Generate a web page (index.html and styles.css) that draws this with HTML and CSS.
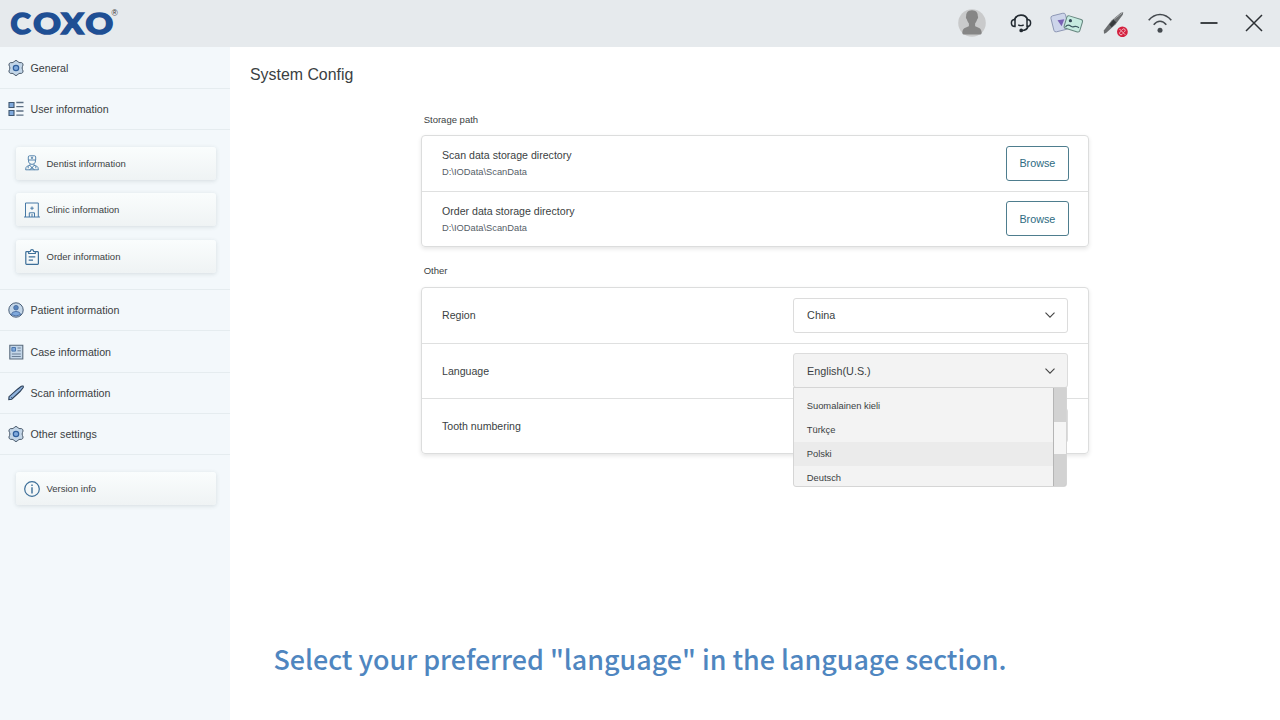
FILE: index.html
```html
<!DOCTYPE html>
<html lang="en">

<head>
    <meta charset="UTF-8">
    <meta name="viewport" content="width=device-width, initial-scale=1.0">
    <title>System Config</title>
    <link rel="stylesheet" href="styles.css">
</head>

<body>
    <!-- Shared icons -->
    <svg width="0" height="0" class="defs">
        <symbol id="gear" viewBox="0 0 16 16">
            <path d="M8 .5 Q9.300 .5 10.200 2 Q10.800 2.800 12 2.600 Q14 2.300 14.800 3.600 Q15.500 5 14.500 6.400 Q13.700 8 14.500 9.600 Q15.500 11 14.800 12.400 Q14 13.700 12 13.400 Q10.800 13.200 10.200 14 Q9.300 15.500 8 15.500 Q6.700 15.500 5.800 14 Q5.200 13.200 4 13.400 Q2 13.700 1.200 12.400 Q.5 11 1.500 9.600 Q2.300 8 1.500 6.400 Q.5 5 1.200 3.600 Q2 2.300 4 2.600 Q5.200 2.800 5.800 2 Q6.700 .5 8 .5Z" fill="#c3d6e8" stroke="#4a5a6b" stroke-width="1"/>
            <circle cx="8" cy="8" r="2.700" fill="#7fa9dc" stroke="#2f5f9c" stroke-width="1.200"/>
        </symbol>
        <symbol id="chevron" viewBox="0 0 10 6">
            <path d="M.5 .6 L5 5.200 L9.500 .6" fill="none" stroke="#444" stroke-width="1.1"/>
        </symbol>
    </svg>

    <header class="topbar">
        <svg class="logo" width="112" height="46" viewBox="0 0 112 46">
            <text class="logo-text" y="33.900"><tspan x="1.500" textLength="20" lengthAdjust="spacingAndGlyphs">C</tspan><tspan x="24.300" textLength="27.600" lengthAdjust="spacingAndGlyphs">O</tspan><tspan x="52.300" textLength="22.500" lengthAdjust="spacingAndGlyphs">X</tspan><tspan x="76.500" textLength="27.600" lengthAdjust="spacingAndGlyphs">O</tspan></text>
            <text class="logo-mark" x="102.500" y="16">®</text>
        </svg>
        <div class="tools">
            <svg class="avatar" width="28" height="28" viewBox="0 0 28 28">
                <circle cx="14" cy="14" r="13.8" fill="#c9cacb"/>
                <path d="M14 1.200 C9.800 1.200 7.900 4 8.200 7.300 C7.500 7.600 8 10.200 8.900 10.500 C9.300 12.500 10.300 13.500 10.900 14.400 L10.900 17 C10.100 18.300 4.600 18 4.300 23.500 Q4.300 25.400 5.500 25.400 L22.500 25.400 Q23.700 25.400 23.700 23.500 C23.400 18 17.900 18.300 17.100 17 L17.100 14.400 C17.700 13.500 18.700 12.500 19.100 10.500 C20 10.200 20.500 7.600 19.800 7.300 C20.100 4 18.200 1.200 14 1.200Z" fill="#868686"/>
            </svg>
            <svg class="headset" width="22" height="20" viewBox="0 0 22 20" fill="none" stroke="#222a31" stroke-width="1.7">
                <path d="M4.200 7 A7.200 7.200 0 0 1 17.800 7"/>
                <path d="M5 6.600 Q1.400 6.500 1.400 10 Q1.400 13.500 5 13.500Z M17 6.600 Q20.600 6.500 20.600 10 Q20.600 13.500 17 13.500Z" stroke-width="1.5"/>
                <path d="M18 13.500 Q16.800 17.500 11.800 17.500" />
                <path d="M8.200 11.900 Q11 13.400 13.700 11.900" stroke-width="1.400"/>
                <circle cx="11.200" cy="17.400" r="1" fill="#222a31"/>
            </svg>
            <svg class="media" width="34" height="24" viewBox="0 0 34 24">
                <rect x="2.200" y="3.200" width="15" height="16.500" rx="2.200" transform="rotate(-14 10 11.500)" fill="#cdd5ea" stroke="#8b95b2" stroke-width=".9"/>
                <path d="M7.500 9.300 L14.300 8.200 L11.600 15.300Z" fill="#7862b4"/>
                <rect x="15.200" y="6.300" width="16.300" height="13" rx="2" transform="rotate(17 23 12.800)" fill="#c6ebe0" stroke="#66867f" stroke-width="1"/>
                <circle cx="20.400" cy="9.700" r="1.600" fill="#334856"/>
                <path d="M15.500 15.800 C18 12.500 20 14.500 21.500 15.500 C23.500 17 25 13.500 29 16.800" fill="none" stroke="#3c5860" stroke-width="1.200"/>
            </svg>
            <svg class="scanner" width="26" height="28" viewBox="0 0 26 28">
                <path d="M1 24.700 L.8 21.500 L8.500 11.500 L17.800 3.800 L20.300 3.200 L19.800 5.800 L12.500 15.500 L3 24Z" fill="#6b6e70"/>
                <path d="M6.300 15.400 L10.500 10.700 L13.200 13.200 L8.700 18.200Z" fill="#36393c"/>
                <path d="M11 10.200 L19 4.200" stroke="#a9acae" stroke-width="1"/>
                <circle cx="19.400" cy="22.800" r="5.400" fill="#d4213f"/>
                <path d="M18.500 21.400 l1.300-1.300 a1.500 1.500 0 0 1 2.100 2.100 l-1.300 1.300 M20.300 24.200 l-1.300 1.300 a1.500 1.500 0 0 1-2.100-2.100 l1.300-1.300 M16.500 20 l5.800 5.800" fill="none" stroke="#f5c4cc" stroke-width=".9"/>
            </svg>
            <svg class="wifi" width="26" height="22" viewBox="0 0 26 22" fill="none" stroke="#454a4f" stroke-width="1.600">
                <path d="M1.700 8.300 Q6.500 2.500 13 2.500 Q19.500 2.500 24.300 8.300"/>
                <path d="M6.700 12.800 Q9.500 9.300 13 9.300 Q16.500 9.300 19.300 12.800"/>
                <circle cx="13" cy="18.300" r="2.500" fill="#454a4f" stroke="none"/>
            </svg>
            <svg class="minimize" width="18" height="18" viewBox="0 0 18 18">
                <path d="M.5 9 H17.500" stroke="#2c3034" stroke-width="1.800"/>
            </svg>
            <svg class="close" width="18" height="18" viewBox="0 0 18 18">
                <path d="M1 1 L17 17 M17 1 L1 17" stroke="#2c3034" stroke-width="1.500"/>
            </svg>
        </div>
    </header>

    <div class="layout">
        <nav class="sidebar">
            <a class="nav-item"><svg width="16" height="16"><use href="#gear"/></svg>General</a>
            <a class="nav-item">
                <svg width="16" height="16" viewBox="0 0 16 16">
                    <path d="M1 1.500 h5 v5 h-5z M1 9.500 h5 v5 h-5z" fill="#7fa9dc" stroke="#3f566f" stroke-width="1.100"/>
                    <path d="M8.300 1.500 H15.500 M8.300 5.700 H15.500 M8.300 10 H15.500 M8.300 14.200 H15.500" stroke="#5d6f84" stroke-width="1.300"/>
                </svg>User information
            </a>
            <div class="sub-menu">
                <a class="sub-item">
                    <svg width="16" height="16" viewBox="0 0 16 16" fill="none" stroke="#4679a6" stroke-width=".9">
                        <path d="M4.300 5 V2 Q4.300 .9 5.500 .8 H10.500 Q11.700 .9 11.700 2 V5Z M4.600 5 V7 Q5.500 9.400 8 9.400 Q10.500 9.400 11.400 7 V5 M8 1.800 V4 M6.900 2.900 H9.100"/>
                        <path d="M6 9.200 V10.300 L3.300 11.100 Q1.600 12 1.600 14.800 H14.400 Q14.400 12 12.700 11.100 L10 10.300 V9.200 M6 10.300 L8 13 L10 10.300 M4.200 11.200 V13.300 M11.800 11.200 V13.300 M5.500 14.600 L8 13 L10.500 14.600"/>
                    </svg>Dentist information
                </a>
                <a class="sub-item">
                    <svg width="16" height="16" viewBox="0 0 16 16" fill="none" stroke="#4679a6" stroke-width="1">
                        <path d="M1.500 15 V1 H14.300 V15 M0 15 H16 M5.300 15 V10.800 H10.500 V15 M8 12 V15 M8 4.500 V7.900 M6.300 6.200 H9.700"/>
                    </svg>Clinic information
                </a>
                <a class="sub-item">
                    <svg width="16" height="16" viewBox="0 0 16 16" fill="none" stroke="#3c6e98" stroke-width="1.200">
                        <path d="M4.500 2.600 H2.600 Q1.800 2.600 1.800 3.400 V14.600 Q1.800 15.400 2.600 15.400 H13.600 Q14.400 15.400 14.400 14.600 V3.400 Q14.400 2.600 13.600 2.600 H11.500"/>
                        <path d="M4.700 4.500 V2.500 H6.300 Q6.600 .7 8 .7 Q9.400 .7 9.700 2.500 H11.300 V4.500Z M4.700 7.900 H11.300 M4.700 11.200 H9"/>
                    </svg>Order information
                </a>
            </div>
            <a class="nav-item">
                <svg width="16" height="16" viewBox="0 0 16 16">
                    <circle cx="8" cy="8" r="7.200" fill="#c3d6e8" stroke="#4a5f78" stroke-width="1"/>
                    <circle cx="8" cy="5.700" r="2.300" fill="#5684bd" stroke="#41669a" stroke-width=".8"/>
                    <path d="M3.300 12.500 Q4 9.400 8 9.400 Q12 9.400 12.700 12.500 Q8 15.500 3.300 12.500Z" fill="#7fa9dc" stroke="#41669a" stroke-width=".8"/>
                </svg>Patient information
            </a>
            <a class="nav-item">
                <svg width="16" height="16" viewBox="0 0 16 16">
                    <path d="M1.800 1.200 H14.800 V15 H1.800Z" fill="#c3d6e8" stroke="#5a6b7d" stroke-width="1.100"/>
                    <path d="M3.900 3.500 h3.600 v3.600 h-3.600z" fill="#7fa9dc" stroke="#4c77ad"/>
                    <path d="M9.500 4 H12.800 M9.500 6.800 H12.800 M3.800 10 H12.800 M3.800 12.500 H12.800" stroke="#6b7f96"/>
                </svg>Case information
            </a>
            <a class="nav-item">
                <svg width="16" height="16" viewBox="0 0 16 16">
                    <path d="M.8 14.700 L1 11.700 L9.500 4.200 L13.300 1.200 Q15.800 .3 15.200 2.500 L12 6.500 L3.700 14.200Z" fill="#8fb3dd" stroke="#2b3f58" stroke-width="1.100"/>
                    <path d="M3 11.900 L4 13" stroke="#2b3f58" stroke-width=".7"/>
                </svg>Scan information
            </a>
            <a class="nav-item"><svg width="16" height="16"><use href="#gear"/></svg>Other settings</a>
            <div class="sub-menu">
                <a class="sub-item">
                    <svg width="16" height="16" viewBox="0 0 16 16" fill="none" stroke="#3c6e98" stroke-width="1.200">
                        <circle cx="8" cy="8" r="7.300"/>
                        <path d="M8 6.300 V12.500 M8 3.500 V5" stroke-width="1.400"/>
                    </svg>Version info
                </a>
            </div>
        </nav>

        <main class="content">
            <h1>System Config</h1>

            <div class="settings">
                <h2>Storage path</h2>
                <section class="card">
                    <div class="row">
                        <div class="path">
                            <div>Scan data storage directory</div>
                            <div class="path-value">D:\IOData\ScanData</div>
                        </div>
                        <button class="browse">Browse</button>
                    </div>
                    <div class="row">
                        <div class="path">
                            <div>Order data storage directory</div>
                            <div class="path-value">D:\IOData\ScanData</div>
                        </div>
                        <button class="browse">Browse</button>
                    </div>
                </section>

                <h2>Other</h2>
                <section class="card">
                    <div class="row">
                        <span>Region</span>
                        <div class="select">China<svg width="10" height="6"><use href="#chevron"/></svg></div>
                    </div>
                    <div class="row">
                        <span>Language</span>
                        <div class="select open">
                            English(U.S.)<svg width="10" height="6"><use href="#chevron"/></svg>
                            <div class="dropdown">
                                <ul class="options">
                                    <li>Suomalainen kieli</li>
                                    <li>Türkçe</li>
                                    <li class="hover">Polski</li>
                                    <li>Deutsch</li>
                                </ul>
                                <div class="scrollbar">
                                    <div class="scroll-thumb"></div>
                                </div>
                            </div>
                        </div>
                    </div>
                    <div class="row">
                        <span>Tooth numbering</span>
                        <div class="select"></div>
                    </div>
                </section>
            </div>

            <p class="caption">Select your preferred "language" in the language section.</p>
        </main>
    </div>

    <svg class="cursor" width="9" height="14" viewBox="0 0 9 14">
        <path d="M1 1 V11 L3.300 9 L5 12.700 L6.700 12 L5.200 8.400 L8.200 8.200Z" fill="#fff" stroke="#444" stroke-width=".9"/>
    </svg>
</body>

</html>
```
FILE: styles.css
```css
* {
    box-sizing: border-box;
}

body {
    margin: 0;
    height: 720px;
    overflow: hidden;
    display: flex;
    flex-direction: column;
    font-family: "Liberation Sans", Arial, sans-serif;
    font-size: 10.67px;
    color: #3b3f43;
    background: #fff;
}

.defs {
    position: absolute;
}

/* Title bar */
.topbar {
    height: 46.500px;
    flex: none;
    display: flex;
    align-items: center;
    justify-content: space-between;
    padding: 0 17px .5px 9px;
    background: #e6eaed;
}

.logo-text {
    font-family: Lato, sans-serif;
    font-size: 28.500px;
    font-weight: 900;
    fill: #1f4f94;
    stroke: #1f4f94;
    stroke-width: 1.500px;
}

.logo-mark {
    font-size: 8.500px;
    fill: #333;
}

.tools {
    display: flex;
    align-items: center;
}

.headset {
    margin-left: 23.500px;
}

.media {
    margin-left: 18.500px;
}

.scanner {
    margin-left: 19px;
}

.wifi {
    margin-left: 18px;
}

.minimize {
    margin-left: 27px;
}

.close {
    margin-left: 27px;
}

/* Sidebar */
.layout {
    flex: 1;
    display: flex;
}

.sidebar {
    width: 230px;
    flex: none;
    padding-top: 1px;
    background: #f3f8fb;
}

.nav-item {
    display: flex;
    align-items: center;
    gap: 6.500px;
    height: 41.300px;
    padding-left: 8px;
    border-bottom: 1px solid #e5ecef;
}

.sub-menu {
    display: flex;
    flex-direction: column;
    gap: 13.700px;
    padding: 16.700px 14px 16px 15.500px;
    border-bottom: 1px solid #e5ecef;
}

.sub-menu:last-child {
    border-bottom: none;
}

.sub-item {
    display: flex;
    align-items: center;
    gap: 7px;
    height: 33px;
    padding-left: 8px;
    font-size: 9.500px;
    border-radius: 3px;
    background: linear-gradient(#fafdfd, #eff3f4);
    box-shadow: 0 1px 4px rgba(60, 80, 90, .16);
}

/* Settings */
.content {
    flex: 1;
    display: flex;
    flex-direction: column;
}

h1 {
    margin: 19px 0 0 20px;
    font-size: 15.900px;
    line-height: 18px;
    font-weight: normal;
}

.settings {
    width: 668px;
    margin: 30px 0 0 191.400px;
    font-size: 10.600px;
}

h2 {
    margin: 0 0 9.500px 2.300px;
    font-size: 9.500px;
    line-height: 12px;
    font-weight: normal;
}

.card {
    margin-bottom: 18.600px;
    border: 1px solid #dcdddd;
    border-radius: 4px;
    box-shadow: 0 2px 4px rgba(0, 0, 0, .1);
}

.row {
    height: 54.700px;
    display: flex;
    align-items: center;
    justify-content: space-between;
    padding: 0 19px 0 19.600px;
}

.row + .row {
    height: 55.200px;
    border-top: 1px solid #dfe0e0;
}

.path {
    padding-top: 2px;
    line-height: 13px;
}

.path-value {
    margin-top: 4px;
    font-size: 9.330px;
    color: #566068;
}

.browse {
    width: 63px;
    height: 35px;
    padding: 0 1px 0 0;
    font: inherit;
    font-size: 10.800px;
    color: #2e6b82;
    background: #fff;
    border: 1px solid #4e7d8e;
    border-radius: 3px;
}

.select {
    position: relative;
    width: 275.500px;
    height: 35px;
    display: flex;
    align-items: center;
    justify-content: space-between;
    margin-right: 1px;
    padding: 0 12.500px 0 13.200px;
    font-size: 10.800px;
    border: 1px solid #dcdcdc;
    border-radius: 3px;
}

.select.open {
    background: #f3f3f3;
}

.dropdown {
    position: absolute;
    z-index: 1;
    top: 32.500px;
    left: -.5px;
    width: 274px;
    height: 100px;
    display: flex;
    overflow: hidden;
    background: #f3f3f3;
    border: 1px solid #d5d5d5;
    border-radius: 0 0 3px 3px;
}

.options {
    flex: 1;
    margin: 0;
    padding: 6.500px 0 0;
    list-style: none;
    font-size: 9.400px;
}

.options li {
    height: 24px;
    line-height: 24px;
    padding-left: 12.300px;
}

.options .hover {
    background: #ebebeb;
}

.scrollbar {
    width: 12px;
    background: #d2d2d2;
    box-shadow: 0 0 0 1px #b5b5b5;
}

.scroll-thumb {
    height: 32px;
    margin-top: 34px;
    background: #f5f5f5;
}

.cursor {
    position: absolute;
    left: 923px;
    top: 462px;
}

/* Subtitle */
.caption {
    margin: auto 0 39px 43.500px;
    font-family: "Noto Sans CJK SC", sans-serif;
    font-size: 26.870px;
    font-weight: 500;
    line-height: 44px;
    white-space: nowrap;
    color: #4f86c0;
}
```
